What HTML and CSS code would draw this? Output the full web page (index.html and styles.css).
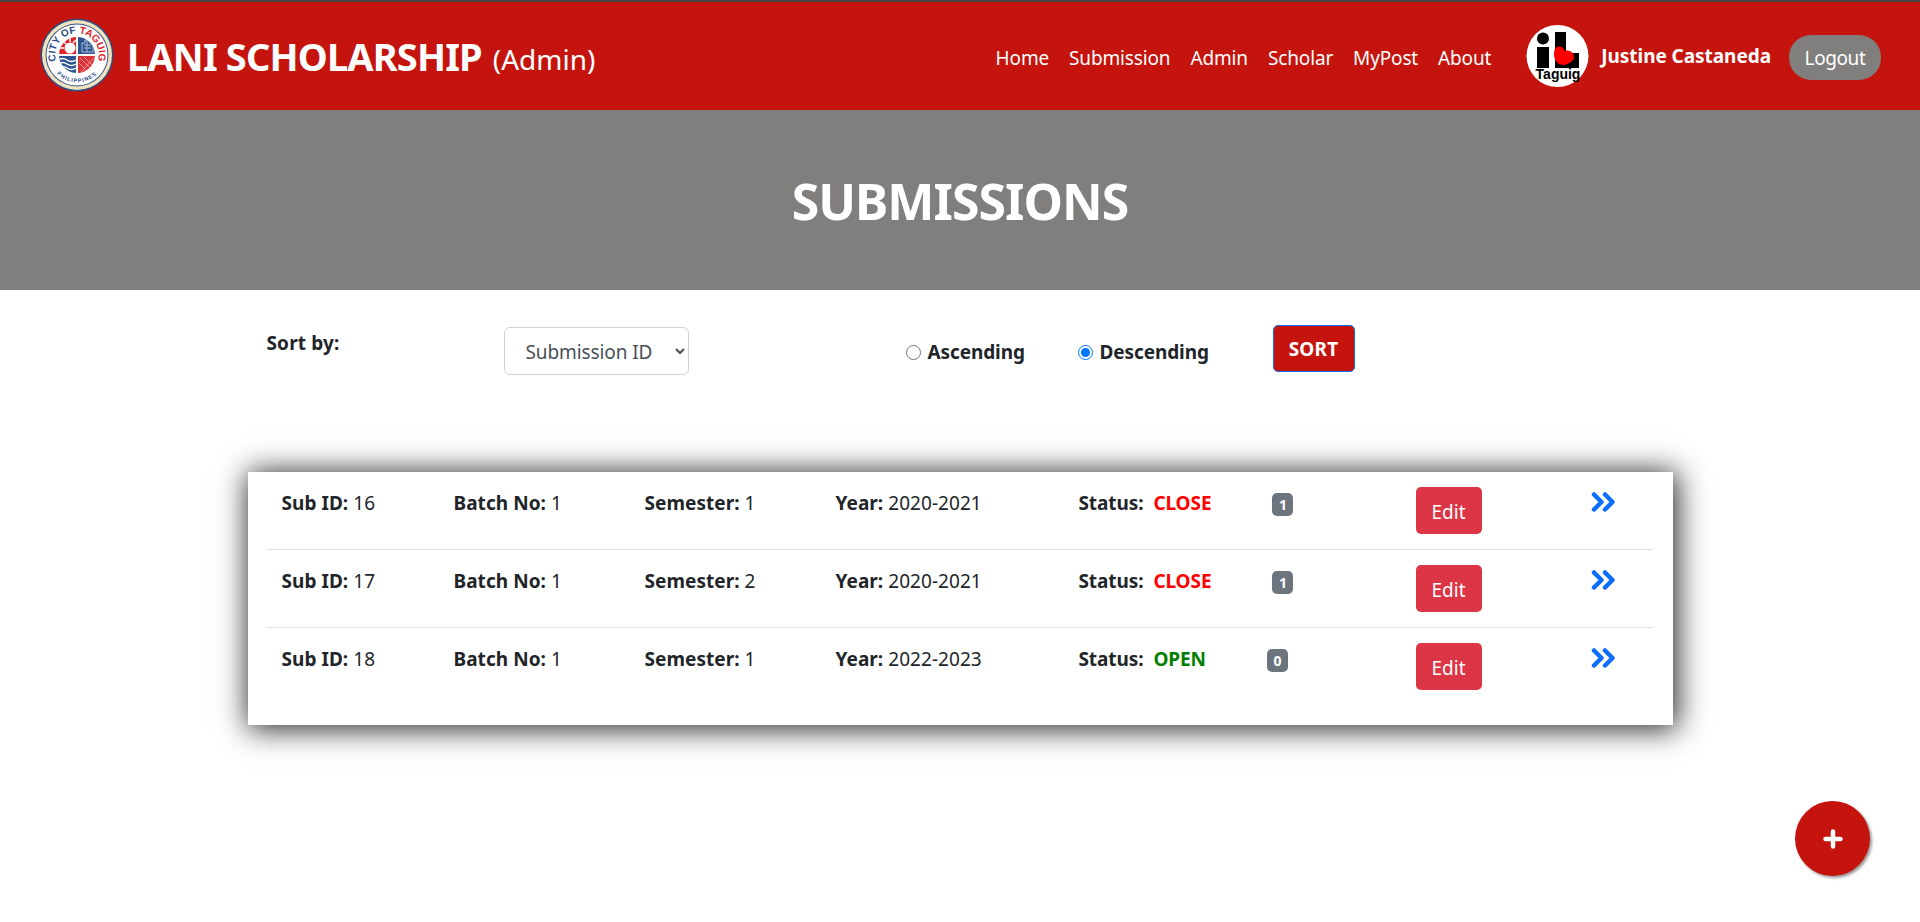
FILE: index.html
```html
<!DOCTYPE html>
<html lang="en">
<head>
<meta charset="utf-8">
<title>Submissions</title>
<link rel="stylesheet" href="styles.css">
</head>
<body>
<nav class="topbar">
  <a class="brand" href="#">
    <svg class="brand-logo" viewBox="0 0 74 74" aria-hidden="true">
      <defs>
        <path id="arcTop" d="M18.400 48.400A21.800 21.800 0 1 1 55.600 48.400"/>
        <path id="arcBottom" d="M9.500 37a27.500 27.500 0 0 0 55 0"/>
        <clipPath id="quadClip"><circle cx="37" cy="37" r="18"/></clipPath>
      </defs>
      <circle cx="37" cy="37" r="36.500" fill="#2c4d86"/>
      <circle cx="37" cy="37" r="35" fill="#f0e3bd"/>
      <circle cx="37" cy="37" r="31.500" fill="#31558f"/>
      <circle cx="37" cy="37" r="30.500" fill="#fff"/>
      <g clip-path="url(#quadClip)">
        <rect x="18" y="18" width="18" height="18" fill="#e0242a"/>
        <rect x="38" y="18" width="18" height="18" fill="#2f5590"/>
        <rect x="18" y="38" width="18" height="18" fill="#2f5590"/>
        <rect x="38" y="38" width="18" height="18" fill="#d8343a"/>
        <circle cx="30" cy="30" r="5.500" fill="#fff"/>
        <path d="M23 23l3 3M30 19v5M36 22l-3 3M20 30h4" stroke="#fff" stroke-width="1.500"/>
        <path d="M42 34V25h3v-3h5v3h3v9zM44 27h7M44 30h7M47 22v12" fill="none" stroke="#a9bdd8" stroke-width="1"/>
        <path d="M18 42q4.500-3 9 0t9 0M18 46q4.500-3 9 0t9 0M18 50q4.500-3 9 0t9 0" fill="none" stroke="#fff" stroke-width="1.400"/>
        <path d="M40 40l14 14M44 39l11 11M39 45l10 10M54 40L41 54" fill="none" stroke="#f3a9a9" stroke-width=".8"/>
      </g>
      <text class="logo-arc"><textPath href="#arcTop" startOffset="50%" text-anchor="middle"><tspan fill="#2c4d86">CITY OF </tspan><tspan fill="#e0242a">TAGUIG</tspan></textPath></text>
      <text class="logo-sub"><textPath href="#arcBottom" startOffset="50%" text-anchor="middle">PHILIPPINES</textPath></text>
    </svg>
    <span class="brand-name">LANI SCHOLARSHIP</span>
    <span class="brand-role">(Admin)</span>
  </a>
  <ul class="menu">
    <li><a href="#">Home</a></li>
    <li><a href="#">Submission</a></li>
    <li><a href="#">Admin</a></li>
    <li><a href="#">Scholar</a></li>
    <li><a href="#">MyPost</a></li>
    <li><a href="#">About</a></li>
  </ul>
  <svg class="avatar" viewBox="0 0 63 62" aria-hidden="true">
    <circle cx="31.500" cy="31" r="31" fill="#fff"/>
    <circle cx="17" cy="13.500" r="6" fill="#000"/>
    <rect x="11" y="22" width="12" height="21" fill="#000"/>
    <path d="M29 7h11v21h13v15H29z" fill="#000"/>
    <path d="M38 40C33 40 28 37 28 29C28 23 31 21.500 33.500 21.500C36 21.500 38 23 38.500 26C41 24.500 48 26 48 32C48 36 43 39 38 40z" fill="#f00"/>
    <text class="avatar-text" x="32" y="53.500" text-anchor="middle">Taguig</text>
  </svg>
  <span class="user-name">Justine Castaneda</span>
  <a class="logout" href="#">Logout</a>
</nav>

<header class="hero"><h1>SUBMISSIONS</h1></header>

<main class="content">
  <form class="sorter">
    <label class="sort-label">Sort by:</label>
    <select class="sort-select"><option>Submission ID</option></select>
    <label class="radio"><input type="radio" name="order">Ascending</label>
    <label class="radio"><input type="radio" name="order" checked>Descending</label>
    <button class="sort-btn" type="button">SORT</button>
  </form>

  <section class="card">
    <div class="row">
      <div class="cell"><b>Sub ID:</b> 16</div>
      <div class="cell"><b>Batch No:</b> 1</div>
      <div class="cell"><b>Semester:</b> 1</div>
      <div class="cell"><b>Year:</b> 2020-2021</div>
      <div class="cell status"><span><b>Status:</b><b class="closed">CLOSE</b></span><span class="badge">1</span></div>
      <a class="edit" href="#">Edit</a>
      <svg class="go" viewBox="0 0 26 20" aria-hidden="true"><path d="M3 2.500l7.500 7.500L3 17.500M14 2.500l7.500 7.500-7.500 7.500"/></svg>
    </div>
    <div class="row">
      <div class="cell"><b>Sub ID:</b> 17</div>
      <div class="cell"><b>Batch No:</b> 1</div>
      <div class="cell"><b>Semester:</b> 2</div>
      <div class="cell"><b>Year:</b> 2020-2021</div>
      <div class="cell status"><span><b>Status:</b><b class="closed">CLOSE</b></span><span class="badge">1</span></div>
      <a class="edit" href="#">Edit</a>
      <svg class="go" viewBox="0 0 26 20" aria-hidden="true"><path d="M3 2.500l7.500 7.500L3 17.500M14 2.500l7.500 7.500-7.500 7.500"/></svg>
    </div>
    <div class="row">
      <div class="cell"><b>Sub ID:</b> 18</div>
      <div class="cell"><b>Batch No:</b> 1</div>
      <div class="cell"><b>Semester:</b> 1</div>
      <div class="cell"><b>Year:</b> 2022-2023</div>
      <div class="cell status"><span><b>Status:</b><b class="opened">OPEN</b></span><span class="badge">0</span></div>
      <a class="edit" href="#">Edit</a>
      <svg class="go" viewBox="0 0 26 20" aria-hidden="true"><path d="M3 2.500l7.500 7.500L3 17.500M14 2.500l7.500 7.500-7.500 7.500"/></svg>
    </div>
  </section>
</main>

<a class="fab" href="#" aria-label="Add">
  <svg viewBox="0 0 20 20" aria-hidden="true"><path d="M10 2.500v15M2.500 10h15"/></svg>
</a>
</body>
</html>
```

FILE: styles.css
```css
* { box-sizing: border-box; }
html, body { margin: 0; height: 100%; }
body {
  background: #fff;
  color: #212529;
  font-family: "Noto Sans", "Open Sans", "Liberation Sans", sans-serif;
  font-size: 19px;
  overflow: hidden;
}
a { color: inherit; text-decoration: none; }

.topbar {
  display: flex;
  align-items: center;
  height: 110px;
  border-top: 2px solid #444;
  background: #c5140d;
  color: #fff;
  padding: 0 39px 0 40px;
}
.brand { display: flex; align-items: center; margin-right: auto; }
.brand-logo { width: 74px; height: 74px; margin: -2px 13px 0 0; }
.logo-arc { font: 700 10px "Liberation Sans", sans-serif; }
.logo-sub { font: 700 5.500px "Liberation Sans", sans-serif; letter-spacing: 1px; fill: #2c4d86; }
.brand-name { font-size: 38px; font-weight: 700; letter-spacing: -.85px; }
.brand-role { font-size: 28px; margin: 5px 0 0 11px; letter-spacing: 0; }

.menu {
  display: flex;
  gap: 20px;
  list-style: none;
  margin: 3px 35px 0 0;
  padding: 0;
  font-size: 19px;
  letter-spacing: -.15px;
}
.avatar { width: 63px; height: 62px; margin: 0 12px 0 0; }
.avatar-text { font: 700 14px "Liberation Sans", sans-serif; fill: #000; }
.user-name { font-size: 19px; font-weight: 700; letter-spacing: -.05px; margin: 0 18px 0 0; }
.logout {
  display: flex;
  align-items: center;
  justify-content: center;
  width: 92px;
  height: 45px;
  margin-top: 3px;
  border-radius: 22px;
  background: #807f7d;
  font-size: 19px;
  letter-spacing: -.4px;
}

.hero {
  display: flex;
  align-items: center;
  justify-content: center;
  height: 180px;
  padding-top: 2px;
  background: #807f7d;
  color: #fff;
}
.hero h1 { margin: 0; font-size: 50px; font-weight: 700; letter-spacing: -1px; }

.content { width: 1425px; margin: 0 auto; }
.sorter {
  display: grid;
  grid-template-columns: 237px 402px 172px 195px auto;
  align-items: start;
  height: 182px;
  padding: 35px 0 0 19px;
  font-weight: 700;
}
.sort-label { margin-top: 5px; letter-spacing: .15px; }
.sort-select {
  width: 185px;
  height: 48px;
  margin-top: 2px;
  padding: 1px 8px 0 17px;
  border: 1px solid #ced4da;
  border-radius: 6px;
  background: #fff;
  color: #495057;
  font: 400 19px "Noto Sans", sans-serif;
  letter-spacing: -.1px;
}
.radio {
  display: flex;
  align-items: center;
  gap: 7px;
  margin-top: 14px;
  letter-spacing: -.1px;
}
.radio input { width: 15px; height: 15px; margin: 0; }
.sort-btn {
  justify-self: start;
  width: 82px;
  height: 47px;
  border: 1px solid #0d6efd;
  border-radius: 5px;
  background: #c5140d;
  color: #fff;
  font: 700 19px "Noto Sans", sans-serif;
  letter-spacing: .2px;
}

.card {
  height: 253px;
  padding: 0 20px 0 18px;
  background: #fff;
  box-shadow: 2px 2px 28px 2px rgba(0, 0, 0, .85);
}
.row {
  display: grid;
  grid-template-columns: 172px 191px 191px 243px 338px 174px auto;
  align-items: start;
  height: 78px;
  padding-left: 16px;
  border-bottom: 1px solid #dee2e6;
  letter-spacing: .05px;
}
.row:last-child { border-bottom: 0; }
.cell { padding-top: 18px; line-height: 26px; color: #212529; }
.status { display: flex; letter-spacing: -.1px; }
.closed, .opened { margin-left: 10px; }
.closed { color: #f00; }
.opened { color: #008000; }
.badge {
  align-self: flex-start;
  display: flex;
  align-items: center;
  justify-content: center;
  min-width: 21px;
  height: 23px;
  margin: 3px 0 0 61px;
  border-radius: 5px;
  background: #6c757d;
  color: #fff;
  font-size: 14px;
  font-weight: 700;
}
.edit {
  display: flex;
  align-items: center;
  justify-content: center;
  width: 66px;
  height: 47px;
  margin: 15px 0 0 -1px;
  padding-top: 3px;
  border-radius: 5px;
  background: #dc3545;
  color: #fff;
}
.go {
  width: 26px;
  height: 20px;
  margin-top: 20px;
  fill: none;
  stroke: #0d6efd;
  stroke-width: 4.500;
  stroke-linecap: round;
  stroke-linejoin: round;
}

.fab {
  position: fixed;
  right: 50px;
  bottom: 46px;
  display: flex;
  align-items: center;
  justify-content: center;
  width: 75px;
  height: 75px;
  border-radius: 50%;
  background: #c5140d;
  box-shadow: 2px 2px 3px #999;
}
.fab svg {
  width: 20px;
  height: 20px;
  fill: none;
  stroke: #fff;
  stroke-width: 4.500;
  stroke-linecap: round;
}
```
